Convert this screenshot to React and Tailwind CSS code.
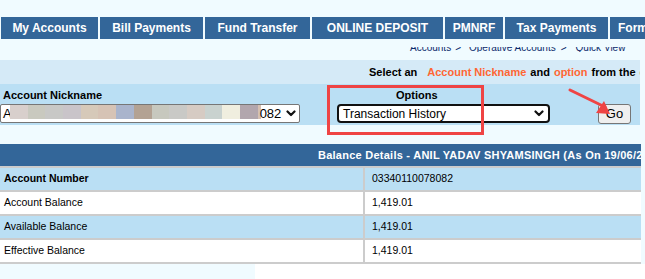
import React from 'react';

const tabs = [
  { label: 'My Accounts', w: 'w-[97px]' },
  { label: 'Bill Payments', w: 'w-[103px]' },
  { label: 'Fund Transfer', w: 'w-[105px]' },
  { label: 'ONLINE DEPOSIT', w: 'w-[131px]' },
  { label: 'PMNRF', w: 'w-[58px]' },
  { label: 'Tax Payments', w: 'w-[103px]' },
];

const blur = ['#d8cfcc', '#c9c9bf', '#c8c8c6', '#c9c4c9', '#d6c9b9', '#d6c3b5', '#a9b4cc', '#b3a293', '#c7c8be', '#c9c9c6', '#d6cbc3', '#c9d2cf', '#f0eedf', '#b2a6ad'];

const rows = [
  { k: 'Account Number', v: '03340110078082', bold: true, bg: 'bg-[#badff4]' },
  { k: 'Account Balance', v: '1,419.01', bg: 'bg-white' },
  { k: 'Available Balance', v: '1,419.01', bg: 'bg-[#badff4]' },
  { k: 'Effective Balance', v: '1,419.01', bg: 'bg-white' },
];

const Chevron = ({ className = '' }) => (
  <svg width="10" height="7" viewBox="0 0 10 7" className={className} fill="none" stroke="#111" strokeWidth="2.2" strokeLinecap="round" strokeLinejoin="round">
    <path d="M1.5 1.5L5 5l3.5-3.5" />
  </svg>
);

export default function App() {
  return (
    <div className="relative w-[645px] h-[279px] overflow-hidden bg-[#f0fbff] font-['Liberation_Sans',Arial,sans-serif] text-black">
      <div className="h-[17px]" />

      {/* main menu */}
      <div className="flex gap-[2px] pl-[1px] h-[22px] whitespace-nowrap">
        {tabs.map(t => (
          <div key={t.label} className={`${t.w} shrink-0 bg-[#336699] text-white text-[12px] font-bold flex items-center justify-center`}>
            {t.label}
          </div>
        ))}
        <div className="w-[90px] shrink-0 bg-[#336699] text-white text-[12px] font-bold flex items-center pl-[8px]">
          Forms
        </div>
      </div>

      {/* breadcrumb (partly hidden) */}
      <div className="h-[21px] pt-[8px]">
        <div className="h-[5px] overflow-hidden">
          <div className="-mt-[5px] flex text-[10px] leading-[11px] text-[#0b2a6b] pl-[410px] whitespace-nowrap">
            <span>Accounts</span>
            <span className="ml-[4px]">&gt;</span>
            <span className="ml-[8px]">Operative Accounts</span>
            <span className="ml-[5px]">&gt;</span>
            <span className="ml-[9px]">Quick View</span>
          </div>
        </div>
      </div>

      {/* instruction band */}
      <div className="w-[640px] h-[24px] bg-[#d5eaf7] overflow-hidden flex items-center pl-[369px] text-[11px] font-bold whitespace-nowrap">
        <span>Select an</span>
        <span className="ml-[10px] text-[#ff6633]">Account Nickname</span>
        <span className="ml-[4px]">and</span>
        <span className="ml-[4px] text-[#ff6633]">option</span>
        <span className="ml-[4px]">from the</span>
        <span className="ml-[4px] text-[#ff6633]">drop down</span>
      </div>

      {/* selection form */}
      <div className="w-[640px] h-[41px] bg-[#badff4] flex">
        <div className="w-[300px] shrink-0 pt-[5px]">
          <div className="pl-[3px] text-[11px] font-bold leading-[12px]">Account Nickname</div>
          <div className="mt-[3px] h-[19px] bg-white border border-[#767676] rounded-[2px] flex items-center text-[13px]">
            <span className="pl-[2px] w-[9px] shrink-0">A</span>
            <div className="flex h-[14px] -mt-[4px]">
              {blur.map((c, i) => (
                <div key={i} className="w-[17.7px] h-full" style={{ background: c }} />
              ))}
              <div className="w-[3px] h-full bg-[#d6c0b2]" />
            </div>
            <span className="-ml-[1px]">082</span>
            <Chevron className="ml-[5px]" />
          </div>
        </div>

        <div className="ml-[37px] w-[213px] shrink-0 pt-[5px]">
          <div className="pl-[59px] text-[11px] font-bold leading-[12px]">Options</div>
          <div className="mt-[3px] h-[19px] bg-white border-2 border-[#111] rounded-[4px] flex items-center justify-between pl-[4px] pr-[4px] text-[12px]">
            <span>Transaction History</span>
            <Chevron />
          </div>
        </div>

        <div className="ml-[48px] pt-[20px]">
          <div className="w-[33px] h-[20px] bg-[#efefef] border border-[#767676] rounded-[3px] flex items-center justify-center text-[13px]">Go</div>
        </div>
      </div>

      <div className="h-[19px]" />

      {/* balance table */}
      <div className="w-[641px] flex flex-col gap-[2px] bg-[#cccccc] pb-[2px]">
        <div className="h-[22px] bg-[#336699] text-white text-[11px] font-bold tracking-[0.25px] flex items-center pl-[318px] whitespace-nowrap overflow-hidden">
          Balance Details - ANIL YADAV SHYAMSINGH (As On 19/06/2023)
        </div>
        {rows.map(r => (
          <div key={r.k} className="grid grid-cols-[363px_1fr] gap-x-[2px] h-[22px]">
            <div className={`${r.bg} flex items-center pl-[4px] text-[10.5px] ${r.bold ? 'font-bold' : ''}`}>{r.k}</div>
            <div className={`${r.bg} flex items-center pl-[7px] text-[10.5px]`}>{r.v}</div>
          </div>
        ))}
      </div>

      <div className="flex h-[15px]">
        <div className="w-[255px] bg-[#f0fbff]" />
        <div className="flex-1 bg-white" />
      </div>

      {/* annotations */}
      <div className="absolute left-[327px] top-[85px] w-[157px] h-[50px] border-[3px] border-[#ef4444]" />
      <svg className="absolute left-[560px] top-[84px]" width="60" height="40" viewBox="0 0 60 40">
        <line x1="10" y1="6" x2="45" y2="23" stroke="#ef4444" strokeWidth="3" strokeLinecap="round" />
        <path d="M50 30 L36 29 L44 17 Z" fill="#ef4444" />
      </svg>
    </div>
  );
}
